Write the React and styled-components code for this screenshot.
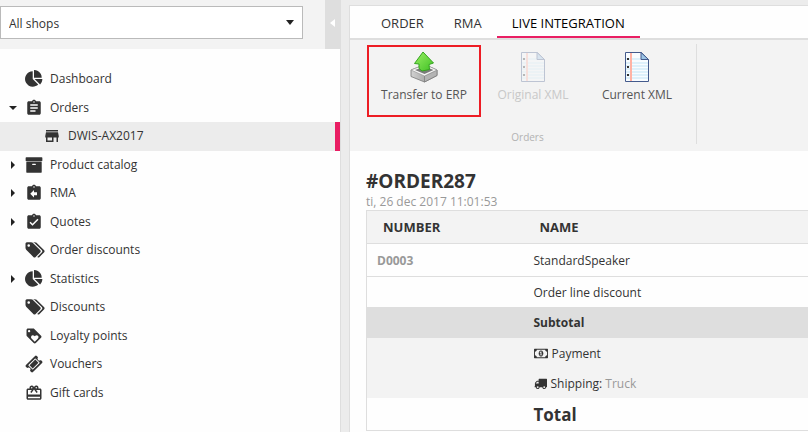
import React from 'react'
import styled, { createGlobalStyle, css } from 'styled-components'
import {
  MdAssignment,
  MdAssignmentReturn,
  MdAssignmentTurnedIn,
  MdCardGiftcard,
  MdLoyalty,
  MdStore,
} from 'react-icons/md'

const GlobalStyle = createGlobalStyle`
  * { box-sizing: border-box; }
  html, body, #root { height: 100%; }
  body {
    margin: 0;
    overflow: hidden;
    background: #ececec;
    color: #333;
    font-family: "Open Sans", "Noto Sans", sans-serif;
    font-size: 12px;
    line-height: 16px;
  }
`

const Page = styled.div`
  display: flex;
  gap: 8px;
  height: 100%;
`

const Sidebar = styled.aside`
  flex: 0 0 341px;
  background: #fefefe;
  border-right: 1px solid #dedede;
`

const SidebarHeader = styled.div`
  display: flex;
  justify-content: space-between;
  height: 49px;
  background: #f3f3f3;
`

const SelectWrap = styled.div`
  position: relative;
  width: 303px;
  padding-top: 6px;
`

const ShopSelect = styled.select`
  appearance: none;
  width: 100%;
  height: 33px;
  padding: 2px 8px 0;
  border: 1px solid #bababa;
  border-radius: 0;
  background: #fff;
  color: #333;
  font: inherit;
`

const SelectArrow = styled.svg`
  position: absolute;
  top: 20px;
  right: 9px;
  pointer-events: none;
`

const Collapse = styled.button`
  display: flex;
  align-items: center;
  justify-content: center;
  width: 15px;
  padding: 0 0 3px;
  border: 0;
  background: #dedede;
`

const Nav = styled.nav`
  display: grid;
  grid-auto-rows: 1fr;
  min-height: 342px;
  margin-top: 16px;
`

const NavItem = styled.a`
  display: flex;
  align-items: center;
  padding-left: ${p => (p.$child ? '26px' : '8px')};
  color: #333;
  text-decoration: none;

  ${p => p.$active && css`
    background: #ececec;
    border-right: 5px solid #e91e63;
  `}
`

const Caret = styled.span`
  display: flex;
  justify-content: center;
  width: 9px;
`

const NavIcon = styled.span`
  display: flex;
  justify-content: center;
  width: 18px;
  margin: 0 7px 0 8px;

  svg {
    flex-shrink: 0;
  }
`

const Main = styled.main`
  flex: 1;
  min-width: 0;
  margin-top: 5px;
  background: #fefefe;
  border: solid #dedede;
  border-width: 1px 0 0 1px;
`

const Tabs = styled.div`
  display: flex;
  height: 34px;
  padding-left: 16px;
  border-bottom: 2px solid #dedede;
`

const Tab = styled.button`
  padding: 4px 15px 0;
  border: 0;
  border-bottom: 2px solid ${p => (p.$active ? '#e91e63' : 'transparent')};
  background: none;
  color: ${p => (p.$active ? '#000' : '#333')};
  font: inherit;
  font-size: 13px;
`

const Ribbon = styled.div`
  display: flex;
  height: 111px;
  padding: 4px 0 6px 17px;
  background: #f3f3f3;
`

const RibbonGroup = styled.div`
  display: flex;
  flex-direction: column;
  justify-content: space-between;
  width: 330px;
  height: 100px;
  border-right: 1px solid #dedede;
`

const RibbonButtons = styled.div`
  display: flex;
  padding-top: 1px;
`

const RibbonButton = styled.button`
  display: flex;
  flex-direction: column;
  align-items: center;
  gap: 4px;
  flex: 0 0 ${p => (p.$outlined ? '114px' : '104px')};
  height: 72px;
  padding: 4px 0 0;
  border: 2px solid ${p => (p.$outlined ? '#ed1c24' : 'transparent')};
  background: none;
  color: #555;
  font: inherit;

  &:disabled {
    color: #c8c8c8;
  }
  &:disabled svg {
    opacity: 0.3;
  }
`

const GroupLabel = styled.span`
  padding-right: 8px;
  color: #b2b2b2;
  font-size: 10px;
  line-height: 14px;
  text-align: center;
`

const Content = styled.section`
  padding: 18px 0 0 16px;
`

const Title = styled.h1`
  margin: 0;
  font-size: 19px;
  font-weight: 700;
  line-height: 24px;
`

const DateLine = styled.div`
  color: #999;
  line-height: 17px;
`

const OrderTable = styled.table`
  width: 100%;
  border-collapse: collapse;
  border: solid #dedede;
  border-width: 1px 0 1px 1px;
  table-layout: fixed;

  th, td {
    padding: 2px 10px 0;
    text-align: left;
  }
  th:first-child {
    width: 157px;
  }
`

const HeadRow = styled.tr`
  height: 33px;
  background: #f3f3f3;
  border-bottom: 1px solid #dedede;

  && th {
    padding: 0 16px;
    font-size: 13px;
  }
`

const fills = { line: '#fefefe', subtotal: '#dedede', shaded: '#f3f3f3' }
const heights = { subtotal: '31px', shaded: '30px' }

const Row = styled.tr`
  height: ${p => (p.$tall ? '33px' : heights[p.$fill] || '30px')};
  background: ${p => fills[p.$fill || 'line']};
  border-bottom: ${p => (p.$ruled ? '1px solid #dedede' : '0')};
  font-weight: ${p => (p.$bold ? 700 : 400)};
  font-size: ${p => (p.$total ? '17px' : 'inherit')};
`

const Muted = styled.span`
  color: #999;
  font-weight: ${p => (p.$bold ? 700 : 400)};
`

const Inline = styled.span`
  display: flex;
  align-items: center;
  gap: 4px;
`

// Font Awesome 4 outlines, width and height in font units
const glyphs = {
  pie: [1792, 'M768 890l546 546q-106 108-247.5 168t-298.5 60q-209 0-385.500-103t-279.500-279.500-103-385.500 103-385.500 279.500-279.500 385.500-103v762zm187 6h773q0 157-60 298.500t-168 247.500zm709-128h-768v-768q209 0 385.500 103t279.500 279.500 103 385.500z'],
  archive: [1792, 'M1088 832q0-26-19-45t-45-19h-256q-26 0-45 19t-19 45 19 45 45 19h256q26 0 45-19t19-45zm576-192v960q0 26-19 45t-45 19h-1408q-26 0-45-19t-19-45v-960q0-26 19-45t45-19h1408q26 0 45 19t19 45zm64-448v256q0 26-19 45t-45 19h-1536q-26 0-45-19t-19-45v-256q0-26 19-45t45-19h1536q26 0 45 19t19 45z'],
  tags: [2048, 'M576 448q0-53-37.500-90.500t-90.500-37.500-90.500 37.500-37.500 90.500 37.500 90.500 90.500 37.500 90.500-37.500 37.500-90.500zm1067 576q0 53-37 90l-491 492q-39 37-91 37-53 0-90-37l-715-716q-38-37-64.500-101t-26.500-117v-416q0-52 38-90t90-38h416q53 0 117 26.500t102 64.500l715 714q37 39 37 91zm384 0q0 53-37 90l-491 492q-39 37-91 37-36 0-59-14t-53-45l470-470q37-37 37-90 0-52-37-91l-715-714q-38-38-102-64.500t-117-26.500h224q53 0 117 26.500t102 64.500l715 714q37 39 37 91z'],
  ticket: [1792, 'M1024 452l316 316-572 572-316-316zm-211 979l618-618q19-19 19-45t-19-45l-362-362q-18-18-45-18t-45 18l-618 618q-19 19-19 45t19 45l362 362q18 18 45 18t45-18zm889-637l-907 908q-37 37-90.500 37t-90.500-37l-126-126q56-56 56-136t-56-136-136-56-136 56l-125-126q-37-37-37-90.500t37-90.500l907-906q37-37 90.500-37t90.500 37l125 125q-56 56-56 136t56 136 136 56 136-56l126 125q37 37 37 90.500t-37 90.500z'],
  money: [1920, 'M768 1152h384v-96h-128v-448h-114l-148 137 77 80q42-37 55-57h2v288h-128v96zm512-256q0 70-21 142t-59.500 134-101.500 101-138 39-138-39-101.500-101-59.500-134-21-142 21-142 59.500-134 101.500-101 138-39 138 39 101.500 101 59.500 134 21 142zm512 256v-512q-106 0-181-75t-75-181h-1152q0 106-75 181t-181 75v512q106 0 181 75t75 181h1152q0-106 75-181t181-75zm128-832v1152q0 26-19 45t-45 19h-1792q-26 0-45-19t-19-45v-1152q0-26 19-45t45-19h1792q26 0 45 19t19 45z'],
  truck: [1792, 'M640 1408q0-52-38-90t-90-38-90 38-38 90 38 90 90 38 90-38 38-90zm-384-512h384v-256h-158q-13 0-22 9l-195 195q-9 9-9 22v30zm1280 512q0-52-38-90t-90-38-90 38-38 90 38 90 90 38 90-38 38-90zm256-1088v1024q0 15-4 26.500t-13.500 18.500-16.500 11.500-23.500 6-22.500 2-25.500 0-22.500-.5q0 106-75 181t-181 75-181-75-75-181h-384q0 106-75 181t-181 75-181-75-75-181h-64q-3 0-22.500.5t-25.500 0-22.500-2-23.500-6-16.500-11.500-13.500-18.500-4-26.500q0-26 19-45t45-19v-320q0-8-.5-35t0-38 2.500-34.500 6.500-37 14-30.500 22.500-30l198-198q19-19 50.500-32t58.500-13h160v-192q0-26 19-45t45-19h1024q26 0 45 19t19 45z'],
}

const Glyph = ({ name, size = 18 }) => (
  <svg
    width={Math.round((size * glyphs[name][0]) / 1792)}
    height={size}
    viewBox={`0 0 ${glyphs[name][0]} 1792`}
    fill="currentColor"
    aria-hidden="true"
  >
    <path d={glyphs[name][1]} />
  </svg>
)

const Arrow = ({ open }) => (
  <svg width="8" height="8" viewBox="0 0 8 8" fill="#222" aria-hidden="true">
    <path d={open ? 'M0 2h8L4 6z' : 'M2 0v8l4-4z'} />
  </svg>
)

const TransferIcon = () => (
  <svg width="30" height="32" viewBox="0 0 30 32" aria-hidden="true">
    <defs>
      <linearGradient id="arrow" x1="0" y1="0" x2="1" y2="1">
        <stop offset="0" stopColor="#9af064" />
        <stop offset="1" stopColor="#3fc024" />
      </linearGradient>
      <linearGradient id="front" x1="0" y1="0" x2="1" y2="0">
        <stop offset="0" stopColor="#d2d2d2" />
        <stop offset="1" stopColor="#8a8a8a" />
      </linearGradient>
    </defs>
    <path d="M2 19L16 13.500l12 5.500v5.500L15.500 31 2 25.500z" fill="url(#front)" stroke="#777" strokeWidth=".8" />
    <path d="M15.500 25L28 19v5.500L15.500 31z" fill="#b4b4b4" stroke="#777" strokeWidth=".7" />
    <path d="M2 19L16 13.500 28 19l-12.500 6z" fill="#f7f7f7" stroke="#999" strokeWidth=".7" />
    <path d="M6 19l10-3.500 8.500 3.500-9 4z" fill="#7b7b7b" />
    <path d="M14 1L24.500 12l-4.500 1.500.500 5-7.500 1.500-3-2.500V13l-4.500-.5z" fill="url(#arrow)" stroke="#35a51f" strokeWidth="1" strokeLinejoin="round" />
  </svg>
)

const NotepadIcon = () => (
  <svg width="26" height="32" viewBox="0 0 26 32" aria-hidden="true">
    <path d="M1.500 1.500h16l7 7v22h-23z" fill="#f8fcff" />
    <path d="M2 8h15M2 12h22M2 15h22M2 18h22M2 21h22M2 24h22M2 27h22" stroke="#c3e4f5" />
    <path d="M7 2v28" stroke="#ffb3a5" strokeWidth="2" />
    <path d="M3 7h2v2H3zM3 15h2v2H3zM3 23h2v2H3z" fill="#333" />
    <path d="M1.500 1.500h16l7 7v22h-23z" fill="none" stroke="#445a8c" />
    <path d="M17 1.500v7h7.500z" fill="#9cc5e6" stroke="#445a8c" />
  </svg>
)

const navItems = [
  { label: 'Dashboard', icon: <Glyph name="pie" /> },
  { label: 'Orders', icon: <MdAssignment size={18} />, open: true },
  { label: 'DWIS-AX2017', icon: <MdStore size={18} />, child: true },
  { label: 'Product catalog', icon: <Glyph name="archive" />, open: false },
  { label: 'RMA', icon: <MdAssignmentReturn size={18} />, open: false },
  { label: 'Quotes', icon: <MdAssignmentTurnedIn size={18} />, open: false },
  { label: 'Order discounts', icon: <Glyph name="tags" /> },
  { label: 'Statistics', icon: <Glyph name="pie" />, open: false },
  { label: 'Discounts', icon: <Glyph name="tags" /> },
  { label: 'Loyalty points', icon: <MdLoyalty size={18} /> },
  { label: 'Vouchers', icon: <Glyph name="ticket" /> },
  { label: 'Gift cards', icon: <MdCardGiftcard size={18} /> },
]

const App = () => (
  <Page>
    <GlobalStyle />

    <Sidebar>
      <SidebarHeader>
        <SelectWrap>
          <ShopSelect aria-label="Shop">
            <option>All shops</option>
          </ShopSelect>
          <SelectArrow width="8" height="5" viewBox="0 0 8 5">
            <path d="M0 0h8L4 5z" fill="#222" />
          </SelectArrow>
        </SelectWrap>
        <Collapse aria-label="Collapse">
          <svg width="5" height="8" viewBox="0 0 5 8">
            <path d="M5 0v8L0 4z" fill="#fff" />
          </svg>
        </Collapse>
      </SidebarHeader>

      <Nav>
        {navItems.map(item => (
          <NavItem key={item.label} href="#" $child={item.child} $active={item.child}>
            <Caret>{item.open !== undefined && <Arrow open={item.open} />}</Caret>
            <NavIcon>{item.icon}</NavIcon>
            {item.label}
          </NavItem>
        ))}
      </Nav>
    </Sidebar>

    <Main>
      <Tabs>
        <Tab>ORDER</Tab>
        <Tab>RMA</Tab>
        <Tab $active>LIVE INTEGRATION</Tab>
      </Tabs>

      <Ribbon>
        <RibbonGroup>
          <RibbonButtons>
            <RibbonButton $outlined>
              <TransferIcon />
              Transfer to ERP
            </RibbonButton>
            <RibbonButton disabled>
              <NotepadIcon />
              Original XML
            </RibbonButton>
            <RibbonButton>
              <NotepadIcon />
              Current XML
            </RibbonButton>
          </RibbonButtons>
          <GroupLabel>Orders</GroupLabel>
        </RibbonGroup>
      </Ribbon>

      <Content>
        <Title>#ORDER287</Title>
        <DateLine>ti, 26 dec 2017 11:01:53</DateLine>
        <OrderTable>
          <thead>
            <HeadRow>
              <th>NUMBER</th>
              <th>NAME</th>
            </HeadRow>
          </thead>
          <tbody>
            <Row $tall $ruled>
              <td><Muted $bold>D0003</Muted></td>
              <td>StandardSpeaker</td>
            </Row>
            <Row>
              <td />
              <td>Order line discount</td>
            </Row>
            <Row $fill="subtotal" $bold>
              <td />
              <td>Subtotal</td>
            </Row>
            <Row $fill="shaded">
              <td />
              <td><Inline><Glyph name="money" size={13} />Payment</Inline></td>
            </Row>
            <Row $fill="shaded">
              <td />
              <td><Inline><Glyph name="truck" size={13} /><span>Shipping: <Muted>Truck</Muted></span></Inline></td>
            </Row>
            <Row $tall $bold $total>
              <td />
              <td>Total</td>
            </Row>
          </tbody>
        </OrderTable>
      </Content>
    </Main>
  </Page>
)

export default App
